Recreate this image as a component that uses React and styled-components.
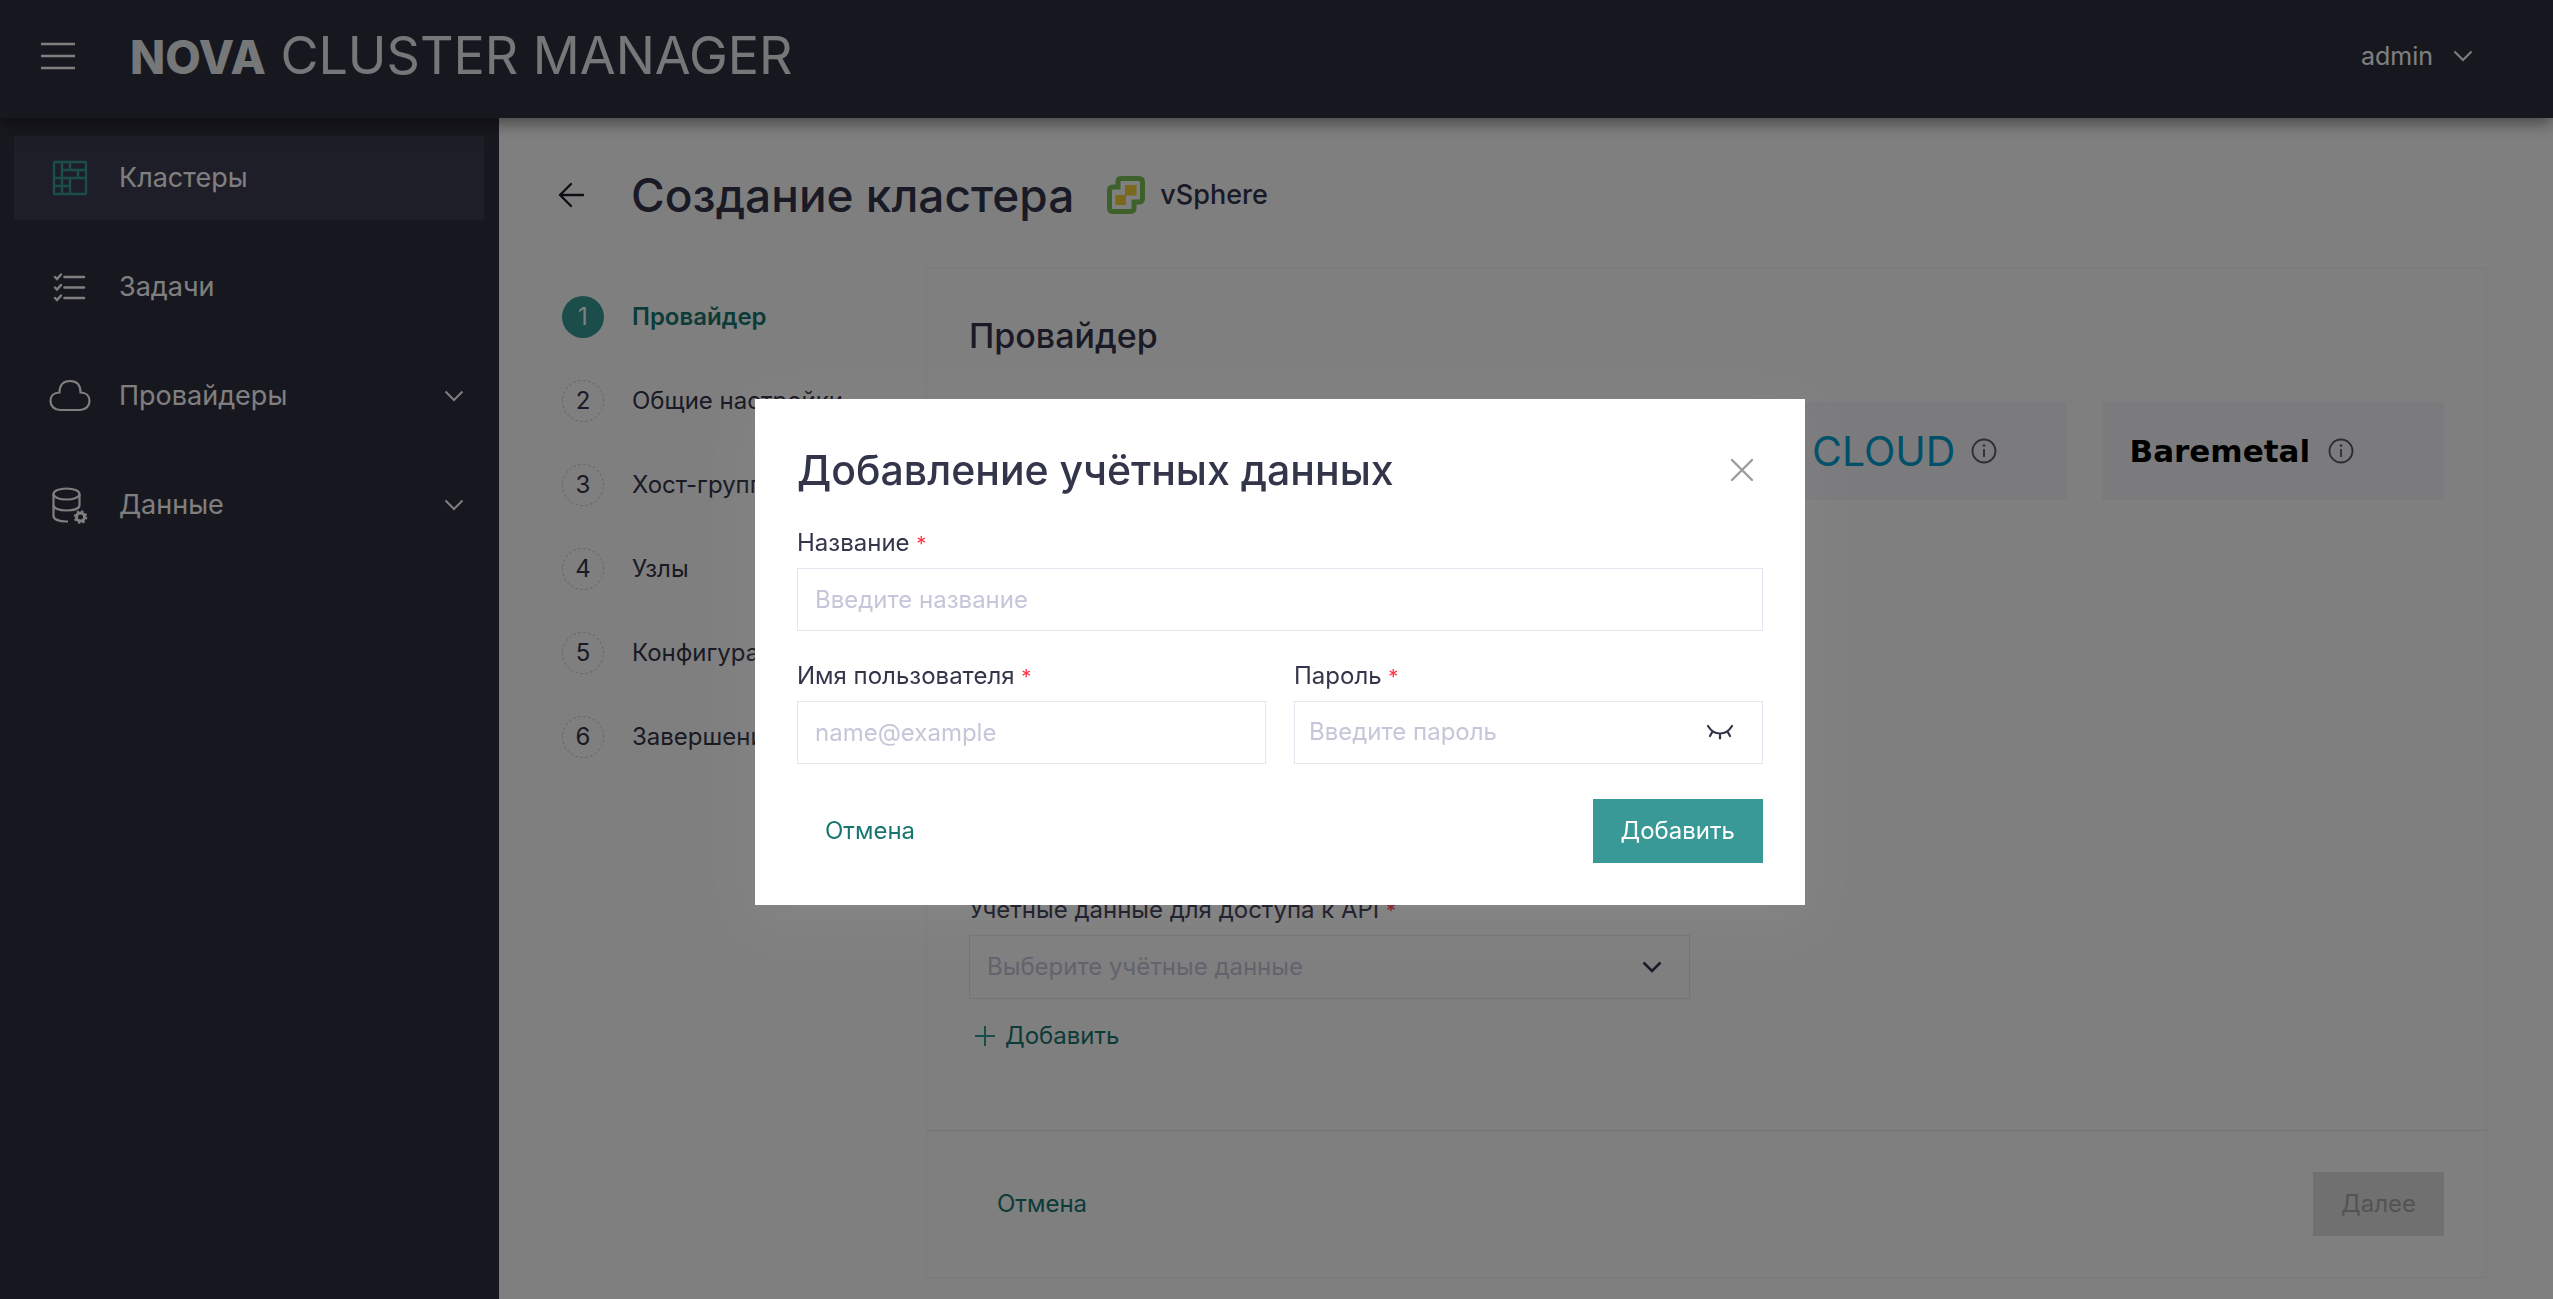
import React, { useState } from "react";
import styled, { createGlobalStyle, css } from "styled-components";

const steps = [
  "Провайдер",
  "Общие настройки",
  "Хост-группы",
  "Узлы",
  "Конфигурация",
  "Завершение",
];

const Chevron = ({ stroke = 2 }) => (
  <svg width="20" height="12" viewBox="0 0 20 12" fill="none" aria-hidden="true">
    <path d="M1.5 1.5 L10 10 L18.5 1.5" stroke="currentColor" strokeWidth={stroke} />
  </svg>
);

const ClustersIcon = () => (
  <svg width="36" height="36" viewBox="0 0 36 36" fill="none" stroke="#369a96" strokeWidth="2.4">
    <rect x="2" y="2" width="32" height="32" rx="1" />
    <path d="M10 2V34M18 2V10M10 10H34M26 10V18M2 18H34M18 18V34M2 26H18" />
  </svg>
);

const TasksIcon = () => (
  <svg width="34" height="30" viewBox="0 0 34 30" fill="none" stroke="currentColor" strokeLinecap="round">
    <path d="M11.5 5H31M11.5 15.5H31M11.5 26H31" strokeWidth="2.6" />
    <path
      d="M2 5L4 7L8 2.5M2 15.5L4 17.5L8 13M2 26L4 28L8 23.5"
      strokeWidth="2.4"
    />
  </svg>
);

const CloudIcon = () => (
  <svg width="42" height="34" viewBox="0 0 42 34" fill="none" stroke="currentColor" strokeWidth="2.2">
    <path d="M10.5 13.5C10.5 6 14.5 2 21 2S31.5 6 31.5 13.5C37 13.5 40.5 17 40.5 22S36.5 31 31 31H11C5.5 31 1.5 27 1.5 22S5 13.5 10.5 13.5Z" />
  </svg>
);

const DataIcon = () => (
  <svg width="36" height="38" viewBox="0 0 36 38" fill="none" stroke="currentColor" strokeWidth="2.2">
    <ellipse cx="14.5" cy="8" rx="13" ry="5.5" />
    <path d="M1.5 8V30C1.5 33 6 35.5 14.5 35.5H16" />
    <path d="M27.5 8V19C27.5 22.5 22 24.5 14.5 24.5S1.5 22.5 1.5 19" />
    <circle cx="28.5" cy="31" r="4" strokeWidth="3" />
    <circle cx="28.5" cy="31" r="5.8" strokeWidth="2" strokeDasharray="2.3 2.255" />
  </svg>
);

const SphereIcon = () => (
  <svg width="40" height="40" viewBox="0 0 40 40" aria-hidden="true">
    <path
      d="M15 3.5H33Q36.5 3.5 36.5 7V23.5Q36.5 27 33 27H28V33Q28 36.5 24.5 36.5H7Q3.5 36.5 3.5 33V15.5Q3.5 12 7 12H12V6.500Q12 3.5 15 3.5Z"
      fill="none"
      stroke="#7cc156"
      strokeWidth="5"
    />
    <path d="M19 10H30.5V20.5H20V30H9.5V20H19Z" fill="#f7d03a" />
  </svg>
);

const InfoIcon = () => (
  <svg width="26" height="26" viewBox="0 0 26 26" fill="none" stroke="#5a5a60" aria-hidden="true">
    <circle cx="13" cy="13" r="11.5" strokeWidth="1.8" />
    <path d="M13 11V19" strokeWidth="1.8" />
    <circle cx="13" cy="7.5" r="1.3" fill="#5a5a60" stroke="none" />
  </svg>
);

const CloudMark = () => (
  <svg width="50" height="30" viewBox="0 0 50 30" fill="none" stroke="#00a0d2" strokeWidth="3">
    <path d="M12 27H38A9 9 0 0 0 38 10A13 13 0 0 0 14 10A9 9 0 0 0 12 27Z" />
  </svg>
);

const ClosedEyeIcon = () => (
  <svg width="28" height="18" viewBox="0 0 28 18" fill="none" stroke="#33354a" strokeWidth="2.2" strokeLinecap="round">
    <path d="M2 3C5 8 9 10.5 14 10.5S23 8 26 3M14 10.5V15.5M6.5 8.5L4 13M21.5 8.5L24 13" />
  </svg>
);

const Required = () => <Star aria-hidden="true">*</Star>;

const App = () => {
  const [open, setOpen] = useState(true);

  return (
    <Page>
      <GlobalStyle />
      <Header>
        <MenuButton aria-label="Меню">
          <svg width="36" height="28" viewBox="0 0 36 28" stroke="currentColor" strokeWidth="2.5">
            <path d="M1 2H35M1 14H35M1 26H35" />
          </svg>
        </MenuButton>
        <Brand href="#">
          <strong>NOVA</strong> CLUSTER MANAGER
        </Brand>
        <UserButton>
          admin <Chevron />
        </UserButton>
      </Header>
      <Body>
        <Sidebar>
          <NavItem href="#clusters" $active>
            <NavIcon><ClustersIcon /></NavIcon>
            <span>Кластеры</span>
          </NavItem>
          <NavItem href="#tasks">
            <NavIcon><TasksIcon /></NavIcon>
            <span>Задачи</span>
          </NavItem>
          <NavItem href="#providers">
            <NavIcon><CloudIcon /></NavIcon>
            <span>Провайдеры</span>
            <Chevron />
          </NavItem>
          <NavItem href="#data">
            <NavIcon><DataIcon /></NavIcon>
            <span>Данные</span>
            <Chevron />
          </NavItem>
        </Sidebar>
        <Main>
          <TitleRow>
            <button aria-label="Назад">
              <svg width="28" height="28" viewBox="0 0 28 28" fill="none" stroke="#1c1c28" strokeWidth="2.4" strokeLinecap="round" strokeLinejoin="round">
                <path d="M26 14H3M14 3L3 14L14 25" />
              </svg>
            </button>
            <h1>Создание кластера</h1>
            <SphereIcon />
            <span>vSphere</span>
          </TitleRow>
          <Columns>
            <Steps>
              {steps.map((step, i) => (
                <Step key={step} $active={i === 0}>
                  <i>{i + 1}</i>
                  {step}
                </Step>
              ))}
            </Steps>
            <Card>
              <CardBody>
                <h2>Провайдер</h2>
                <Tiles>
                  <Tile />
                  <Tile />
                  <Tile>
                    <CloudMark />
                    <CloudName>CLOUD</CloudName>
                    <InfoIcon />
                  </Tile>
                  <Tile>
                    <MetalName>Baremetal</MetalName>
                    <InfoIcon />
                  </Tile>
                </Tiles>
                <Credentials>
                  <Label htmlFor="credentials">
                    Учетные данные для доступа к API <Required />
                  </Label>
                  <SelectBox>
                    <select id="credentials" defaultValue="">
                      <option value="">Выберите учётные данные</option>
                    </select>
                    <Chevron stroke={2.5} />
                  </SelectBox>
                  <AddLink onClick={() => setOpen(true)}>
                    <svg width="20" height="20" viewBox="0 0 20 20" stroke="#369a96" strokeWidth="2">
                      <path d="M10 0V20M0 10H20" />
                    </svg>
                    Добавить
                  </AddLink>
                </Credentials>
              </CardBody>
              <CardFooter>
                <Button>Отмена</Button>
                <Button disabled>Далее</Button>
              </CardFooter>
            </Card>
          </Columns>
        </Main>
      </Body>
      {open && (
        <Overlay>
          <Modal role="dialog" aria-modal="true" aria-labelledby="modal-title">
            <ModalHead>
              <h2 id="modal-title">Добавление учётных данных</h2>
              <button aria-label="Закрыть" onClick={() => setOpen(false)}>
                <svg width="24" height="24" viewBox="0 0 24 24" stroke="#9c9c9c" strokeWidth="2.4" strokeLinecap="round">
                  <path d="M2 2L22 22M22 2L2 22" />
                </svg>
              </button>
            </ModalHead>
            <Field>
              <Label htmlFor="name">
                Название <Required />
              </Label>
              <Input id="name" placeholder="Введите название" />
            </Field>
            <FieldRow>
              <Field>
                <Label htmlFor="user">
                  Имя пользователя <Required />
                </Label>
                <Input id="user" placeholder="name@example" />
              </Field>
              <Field>
                <Label htmlFor="password">
                  Пароль <Required />
                </Label>
                <PasswordBox>
                  <input id="password" type="password" placeholder="Введите пароль" />
                  <button aria-label="Показать пароль">
                    <ClosedEyeIcon />
                  </button>
                </PasswordBox>
              </Field>
            </FieldRow>
            <ModalFooter>
              <Button onClick={() => setOpen(false)}>Отмена</Button>
              <Button $primary>Добавить</Button>
            </ModalFooter>
          </Modal>
        </Overlay>
      )}
    </Page>
  );
};

const GlobalStyle = createGlobalStyle`
  * {
    box-sizing: border-box;
  }
  body {
    margin: 0;
    background: #ffffff;
    color: #33354a;
    font-family: "Inter", "Noto Sans", sans-serif;
    font-size: 24px;
    line-height: 32px;
  }
  h1, h2 {
    margin: 0;
    font-weight: 500;
  }
  button, input, select {
    font: inherit;
  }
  button {
    padding: 0;
    border: 0;
    background: none;
    color: inherit;
    cursor: pointer;
  }
  svg {
    display: block;
    flex: none;
  }
`;

const Page = styled.div`
  min-height: 100vh;
  display: flex;
  flex-direction: column;
`;

const Header = styled.header`
  position: relative;
  z-index: 1;
  height: 118px;
  display: flex;
  align-items: center;
  padding: 0 80px 6px 40px;
  background: #2f2f3e;
  color: #ffffff;
  box-shadow: 0 4px 16px rgba(0, 0, 0, 0.5);
`;

const MenuButton = styled.button`
  margin-right: 54px;
`;

const Brand = styled.a`
  color: #eceef2;
  font-size: 52px;
  line-height: 60px;
  font-weight: 400;
  text-decoration: none;

  strong {
    font-size: 46px;
    font-weight: 800;
  }
`;

const UserButton = styled.button`
  margin-left: auto;
  display: flex;
  align-items: center;
  gap: 20px;
  font-size: 25px;
`;

const Body = styled.div`
  flex: 1;
  display: flex;
`;

const Sidebar = styled.nav`
  width: 499px;
  flex: none;
  display: flex;
  flex-direction: column;
  gap: 25px;
  padding: 18px 15px 18px 14px;
  background: #2f2f3e;
`;

const NavItem = styled.a`
  height: 84px;
  display: flex;
  align-items: center;
  padding: 0 20px 0 35px;
  background: ${(props) => (props.$active ? "#3c3c52" : "none")};
  color: #ffffff;
  font-size: 27px;
  text-decoration: none;

  span {
    flex: 1;
  }
`;

const NavIcon = styled.div`
  width: 42px;
  margin-right: 28px;
  display: flex;
  justify-content: center;
`;

const Main = styled.main`
  flex: 1;
  display: flex;
  flex-direction: column;
  padding: 46px 66px 21px 58px;
`;

const TitleRow = styled.div`
  height: 62px;
  display: flex;
  align-items: center;
  margin-bottom: 42px;
  font-size: 27px;
  font-weight: 500;

  h1 {
    margin: 0 32px 0 46px;
    font-size: 46px;
    line-height: 62px;
  }
  span {
    margin-left: 14px;
  }
`;

const Columns = styled.div`
  flex: 1;
  display: flex;
`;

const Steps = styled.ol`
  width: 369px;
  flex: none;
  display: flex;
  flex-direction: column;
  gap: 42px;
  margin: 0;
  padding: 28px 0 0 5px;
  list-style: none;
`;

const Step = styled.li`
  height: 42px;
  display: flex;
  align-items: center;
  gap: 28px;
  white-space: nowrap;

  i {
    width: 42px;
    height: 42px;
    display: flex;
    align-items: center;
    justify-content: center;
    border: 1px dashed #c9c9cf;
    border-radius: 50%;
    font-style: normal;
    font-weight: 400;
  }

  ${(props) =>
    props.$active &&
    css`
      color: #187670;
      font-weight: 600;

      i {
        border: 0;
        background: #369a96;
        color: #ffffff;
      }
    `}
`;

const Card = styled.section`
  flex: 1;
  display: flex;
  flex-direction: column;
  border: 1px solid #f3f3f9;
`;

const CardBody = styled.div`
  flex: 1;
  display: flex;
  flex-direction: column;
  padding: 42px 42px 70px;

  h2 {
    font-size: 34px;
    line-height: 50px;
  }
`;

const Tiles = styled.div`
  display: grid;
  grid-template-columns: repeat(4, 1fr);
  gap: 35px;
  margin-top: 41px;
`;

const Tile = styled.div`
  height: 98px;
  display: flex;
  align-items: center;
  padding: 0 28px;
  background: #f6f6fb;
`;

const CloudName = styled.span`
  margin: 0 16px 0 10px;
  color: #00a0d2;
  font-size: 41px;
  line-height: 50px;
  font-weight: 400;
`;

const MetalName = styled.span`
  margin-right: 18px;
  color: #000000;
  font-family: "DejaVu Sans", sans-serif;
  font-size: 31px;
  font-weight: 700;
`;

const Credentials = styled.div`
  width: calc(50% - 17px);
  margin-top: auto;
`;

const Label = styled.label`
  display: block;
  margin-bottom: 8px;
`;

const Star = styled.span`
  color: #ff3344;
  font-size: 20px;
`;

const SelectBox = styled.div`
  display: flex;
  align-items: center;
  height: 64px;
  padding-right: 27px;
  border: 1px solid #e6e6f0;

  select {
    flex: 1;
    height: 100%;
    padding: 0 17px;
    appearance: none;
    border: 0;
    background: none;
    color: #c5c6d9;
  }
`;

const AddLink = styled.button`
  display: flex;
  align-items: center;
  gap: 10px;
  height: 48px;
  margin-top: 13px;
  padding: 0 6px;
  color: #187670;
`;

const CardFooter = styled.footer`
  display: flex;
  justify-content: space-between;
  padding: 41px 42px;
  border-top: 1px solid #e6e6f0;
`;

const Button = styled.button`
  height: 64px;
  padding: 0 28px;
  background: ${(props) => (props.$primary ? "#389996" : "none")};
  color: ${(props) => (props.$primary ? "#ffffff" : "#187670")};

  &:disabled {
    background: #e0e0e0;
    color: #a6a6a6;
  }
`;

const Overlay = styled.div`
  position: fixed;
  inset: 0;
  z-index: 2;
  display: flex;
  align-items: center;
  justify-content: center;
  padding: 4px 0 0 7px;
  background: rgba(0, 0, 0, 0.5);
`;

const Modal = styled.div`
  width: 1050px;
  padding: 42px;
  background: #ffffff;
  box-shadow: 0 14px 48px rgba(200, 205, 215, 0.09);
`;

const ModalHead = styled.div`
  display: flex;
  align-items: center;
  justify-content: space-between;
  margin-bottom: 28px;
  padding-right: 9px;

  h2 {
    font-size: 41px;
    line-height: 58px;
  }
`;

const Field = styled.div`
  flex: 1;
`;

const FieldRow = styled.div`
  display: flex;
  gap: 28px;
  margin-top: 29px;
`;

const inputStyle = css`
  width: 100%;
  height: 63px;
  border: 1px solid #e6e6f0;
  background: #ffffff;
`;

const Input = styled.input`
  ${inputStyle}
  padding: 0 17px;
  color: #33354a;

  &::placeholder {
    color: #c5c6d9;
  }
`;

const PasswordBox = styled.div`
  ${inputStyle}
  display: flex;
  align-items: center;
  padding-right: 28px;

  input {
    flex: 1;
    padding: 0 14px;
    border: 0;
    outline: 0;
    color: #33354a;
  }
  input::placeholder {
    color: #c5c6d9;
  }
`;

const ModalFooter = styled.div`
  display: flex;
  justify-content: space-between;
  margin-top: 35px;
`;

export default App;
